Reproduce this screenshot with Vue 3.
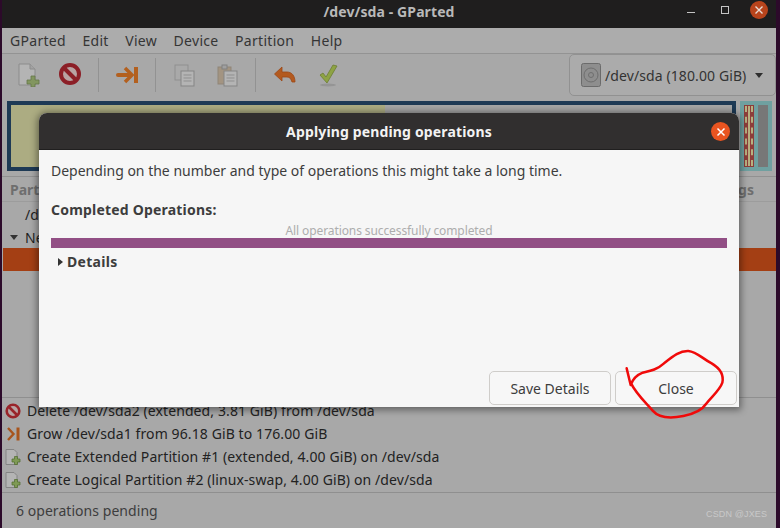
<script setup>
const menus = ['GParted', 'Edit', 'View', 'Device', 'Partition', 'Help']
const ops = [
  { icon: 'del', text: 'Delete /dev/sda2 (extended, 3.81 GiB) from /dev/sda' },
  { icon: 'grow', text: 'Grow /dev/sda1 from 96.18 GiB to 176.00 GiB' },
  { icon: 'new', text: 'Create Extended Partition #1 (extended, 4.00 GiB) on /dev/sda' },
  { icon: 'new', text: 'Create Logical Partition #2 (linux-swap, 4.00 GiB) on /dev/sda' }
]
</script>

<template>
  <div class="screen">
    <div class="window">
      <header class="titlebar">
        <span class="title">/dev/sda - GParted</span>
        <span class="win-min"></span>
        <span class="win-max"></span>
        <span class="win-close">
          <svg width="10" height="10" viewBox="0 0 10 10"><path d="M1.5 1.5l7 7M8.5 1.5l-7 7" stroke="#e8dcd6" stroke-width="1.4" /></svg>
        </span>
      </header>

      <nav class="menubar">
        <span v-for="m in menus" :key="m" class="menu">{{ m }}</span>
      </nav>

      <div class="toolbar">
        <div class="tools">
          <svg class="t t-new" width="22" height="24" viewBox="0 0 22 24">
            <path d="M1 1h11l5 5v16H1z" fill="#b4b4b4" stroke="#8c8c8c" />
            <path d="M12 1v5h5" fill="#a2a2a2" stroke="#8c8c8c" />
            <path d="M13 13h4v4h4v4h-4v3h-4v-3H9v-4h4z" fill="#82965f" stroke="#64774a" stroke-width=".8" />
          </svg>
          <svg class="t t-del" width="22" height="24" viewBox="0 0 22 24">
            <circle cx="11" cy="12" r="9" fill="#b9a3a3" stroke="#8c1f27" stroke-width="4" />
            <path d="M4.500 5.500l13 13" stroke="#8c1f27" stroke-width="4" />
          </svg>
          <i class="sep s1"></i>
          <svg class="t t-grow" width="23" height="20" viewBox="0 0 23 20">
            <path d="M2 10h10" stroke="#b3601f" stroke-width="4" stroke-linecap="round" />
            <path d="M9 3l7 7-7 7" fill="none" stroke="#b3601f" stroke-width="3.500" />
            <path d="M20 2v16" stroke="#b3601f" stroke-width="4" />
          </svg>
          <i class="sep s2"></i>
          <svg class="t t-copy" width="21" height="23" viewBox="0 0 21 23">
            <rect x="1" y="1" width="13" height="15" fill="#a9a9a9" stroke="#8f8f8f" />
            <rect x="7" y="7" width="13" height="15" fill="#b4b4b4" stroke="#858585" />
            <path d="M9.500 11h8M9.500 14h8M9.500 17h8" stroke="#8f8f8f" />
          </svg>
          <svg class="t t-paste" width="21" height="23" viewBox="0 0 21 23">
            <rect x="1" y="3" width="13" height="17" fill="#a39481" stroke="#8f8578" />
            <rect x="5" y="1" width="5" height="4" fill="#a0a0a0" stroke="#808080" />
            <rect x="7" y="7" width="13" height="15" fill="#b4b4b4" stroke="#858585" />
            <path d="M9.500 11h8M9.500 14h8M9.500 17h8" stroke="#8f8f8f" />
          </svg>
          <i class="sep s3"></i>
          <svg class="t t-undo" width="23" height="20" viewBox="0 0 23 20">
            <path d="M9 2L1.500 9 9 16v-4h5c3 0 4 2 5 5h3c0-6-3-10-8-10H9z" fill="#b35a1f" stroke="#9c4615" stroke-width=".8" />
          </svg>
          <svg class="t t-apply" width="20" height="24" viewBox="0 0 20 24">
            <path d="M2 12l3-2 3 4 7-12 4 1-10 17z" fill="#8ea344" stroke="#6c7e33" stroke-width=".8" />
            <ellipse cx="10" cy="22" rx="8" ry="1.500" fill="#959595" />
          </svg>
        </div>
        <div class="device">
          <span class="disk">
            <svg width="20" height="24" viewBox="0 0 20 24"><rect x=".5" y=".5" width="19" height="23" rx="2" fill="#8e8e8e" stroke="#6b6b6b" /><circle cx="10" cy="12" r="7" fill="none" stroke="#6e6e6e" /><circle cx="10" cy="12" r="2.500" fill="none" stroke="#6e6e6e" /></svg>
          </span>
          <span class="device-name">/dev/sda (180.00 GiB)</span>
          <i class="caret"></i>
        </div>
      </div>

      <div class="graph">
        <div class="graph-main"><div class="graph-used"></div></div>
        <div class="graph-side">
          <div class="side-red"><div class="side-dash"></div></div>
          <div class="side-gray"></div>
        </div>
      </div>

      <div class="tree">
        <div class="tree-head"><span>Partition</span><span>Flags</span></div>
        <div class="tree-row root"><span>/dev/sda</span></div>
        <div class="tree-row group"><i class="down"></i><span>New Partition</span></div>
        <div class="tree-row selected"></div>
      </div>

      <div class="ops">
        <div v-for="op in ops" :key="op.text" class="op">
          <svg v-if="op.icon === 'del'" width="16" height="16" viewBox="0 0 16 16"><circle cx="8" cy="8" r="6.300" fill="#b8a4a4" stroke="#99242a" stroke-width="2.600" /><path d="M3.500 3.500l9 9" stroke="#99242a" stroke-width="2.600" /></svg>
          <svg v-else-if="op.icon === 'grow'" width="16" height="16" viewBox="0 0 16 16"><path d="M3 2l5.500 6L3 14" fill="none" stroke="#a8541c" stroke-width="2.400" /><path d="M13 1.500v13" stroke="#a8541c" stroke-width="3" /></svg>
          <svg v-else width="16" height="16" viewBox="0 0 16 16"><path d="M1 .5h8l3 3v12H1z" fill="#b4b4b4" stroke="#848484" /><path d="M9.500 7.500h3v2.500H15v3h-2.500v2.500h-3V13H7v-3h2.500z" fill="#7f9a55" stroke="#4f6a2c" stroke-width=".7" /></svg>
          <span>{{ op.text }}</span>
        </div>
      </div>

      <footer class="status">6 operations pending</footer>
    </div>

    <section class="dialog">
      <div class="dlg-head">
        <span class="dlg-title">Applying pending operations</span>
        <span class="dlg-close">
          <svg width="10" height="10" viewBox="0 0 10 10"><path d="M1.500 1.500l7 7M8.500 1.500l-7 7" stroke="#fff" stroke-width="1.500" /></svg>
        </span>
      </div>
      <div class="dlg-body">
        <p class="lead">Depending on the number and type of operations this might take a long time.</p>
        <p class="done">Completed Operations:</p>
        <p class="bar-label">All operations successfully completed</p>
        <div class="bar"></div>
        <div class="details"><i class="right"></i>Details</div>
        <div class="actions">
          <button class="btn">Save Details</button>
          <button class="btn">Close</button>
        </div>
      </div>
    </section>

    <svg class="scribble" width="320" height="90" viewBox="0 0 960 270">
      <path d="M500 85L512 135C518 118 530 105 548 98C570 93 590 90 612 70C640 48 660 32 685 33C712 36 725 55 755 70C780 85 792 105 787 128C780 150 755 170 738 192C725 212 700 222 670 228C640 234 600 238 578 212C560 190 530 165 512 128" fill="none" stroke="#f00a0a" stroke-width="7.500" stroke-linecap="round" stroke-linejoin="round" />
    </svg>

    <span class="mark">CSDN @JXES</span>
  </div>
</template>

<style>
html, body { margin: 0; background: #2c0f2b; }
</style>

<style scoped>
.screen {
  position: relative;
  width: 780px;
  height: 528px;
  overflow: hidden;
  background: #2c0a2a;
  font-family: "Noto Sans", "DejaVu Sans", sans-serif;
  font-size: 14px;
  color: #3a3a3a;
}
.window {
  width: 774px;
  height: 528px;
  margin-left: 2px;
  background: #a8a8a8;
  display: flex;
  flex-direction: column;
}
.titlebar {
  height: 28px;
  flex: none;
  background: #1f1e1e;
  position: relative;
  display: flex;
  align-items: center;
  justify-content: center;
}
.title {
  font-weight: 700;
  color: #b9b9b9;
  font-size: 14px;
  letter-spacing: .1px;
  margin-top: -6px;
}
.win-min { position: absolute; left: 685px; top: 12px; width: 8px; height: 1px; background: #c4c4c4; }
.win-max { position: absolute; left: 719px; top: 6px; width: 6px; height: 6px; border: 1px solid #c4c4c4; }
.win-close {
  position: absolute; left: 748px; top: 1px; width: 18px; height: 18px; border-radius: 50%;
  background: #b8441c; display: flex; align-items: center; justify-content: center;
}
.menubar {
  height: 25px;
  flex: none;
  background: #acacac;
  border-bottom: 1px solid #939393;
  display: flex;
  align-items: center;
  padding-left: 8px;
  gap: 16.5px;
  color: #353535;
  letter-spacing: .3px;
}
.toolbar {
  height: 46px;
  flex: none;
  display: flex;
  justify-content: space-between;
}
.tools { position: relative; flex: 1; }
.t { position: absolute; }
.t-new { left: 16px; top: 9px; }
.t-del { left: 57px; top: 8px; }
.t-grow { left: 114px; top: 11px; }
.t-copy { left: 172px; top: 10px; }
.t-paste { left: 215px; top: 10px; }
.t-undo { left: 271px; top: 11px; }
.t-apply { left: 316px; top: 9px; }
.sep { position: absolute; top: 4px; width: 1px; height: 34px; background: #929292; }
.s1 { left: 96px; }
.s2 { left: 153px; }
.s3 { left: 253px; }
.device {
  width: 207px;
  height: 42px;
  box-sizing: border-box;
  border: 1px solid #919191;
  border-radius: 5px;
  background: #ababab;
  display: flex;
  align-items: center;
  padding-left: 11px;
  color: #333;
  white-space: nowrap;
}
.disk { width: 20px; height: 24px; display: block; margin-right: 4px; }
.device-name { flex: 1; letter-spacing: .1px; }
.caret { width: 0; height: 0; border: 4.500px solid transparent; border-top: 5px solid #2e2e2e; border-bottom: 0; margin-right: 12px; }
.graph {
  height: 70px;
  flex: none;
  margin-top: 1px;
  display: flex;
  padding-left: 5px;
}
.graph-main {
  width: 729px;
  box-sizing: border-box;
  border: 4px solid #1e3a55;
  background: #a6a6a6;
}
.graph-used { width: 374px; height: 100%; background: #acac82; }
.graph-side {
  margin-left: 4px;
  width: 32px;
  box-sizing: border-box;
  background: #6fa0a0;
  padding: 4px;
  display: flex;
  gap: 4px;
}
.side-red { width: 10px; background: #8c3d3a; position: relative; }
.side-dash {
  position: absolute; left: 1px; right: 1px; top: 1px; bottom: 1px;
  border-left: 2px dashed #b8b080; border-right: 2px dashed #b8b080;
  background: linear-gradient(#b8b080, #b8b080) center / 2px 100% no-repeat;
}
.side-gray { width: 10px; background: #777; }
.tree {
  flex: 1;
  min-height: 0;
  margin-top: 5px;
  border-top: 1px solid #919191;
  border-bottom: 1px solid #8f8f8f;
}
.tree-head {
  height: 24px;
  border-bottom: 1px solid #9c9c9c;
  padding: 0 22px 0 8px;
  display: flex;
  justify-content: space-between;
  align-items: center;
  font-weight: 700;
  color: #6e6e6e;
}
.tree-row { height: 22px; display: flex; align-items: center; color: #1f1f1f; white-space: nowrap; }
.root { padding-left: 23px; height: 24px; }
.group { padding-left: 8px; }
.down { width: 0; height: 0; border: 4.500px solid transparent; border-top: 5px solid #333; border-bottom: 0; margin-right: 7px; }
.selected { background: #a43f14; margin-left: 1px; height: 23px; }
.ops {
  flex: none;
  height: 94px;
  padding-left: 3px;
  margin-top: 1px;
  border-bottom: 1px solid #8f8f8f;
  box-sizing: border-box;
}
.op { height: 23px; display: flex; align-items: center; gap: 6px; color: #222; white-space: nowrap; letter-spacing: .1px; }
.op svg { flex: none; }
.status { height: 35px; flex: none; display: flex; align-items: center; padding-left: 14px; color: #3d3d3d; letter-spacing: .05px; }
.dialog {
  position: absolute;
  left: 39px;
  top: 113px;
  width: 700px;
  height: 294px;
  display: flex;
  flex-direction: column;
  border-radius: 8px 8px 0 0;
  box-shadow: 0 1px 7px 2px rgba(0, 0, 0, .42);
  background: #f6f6f6;
}
.dlg-head {
  height: 37px;
  flex: none;
  background: #312f2f;
  border-radius: 8px 8px 0 0;
  position: relative;
  display: flex;
  align-items: center;
  justify-content: center;
  border-bottom: 1px solid #201f1f;
  box-sizing: border-box;
}
.dlg-title { color: #f3f3f3; font-weight: 700; margin-top: 1px; letter-spacing: .15px; }
.dlg-close {
  position: absolute; left: 672px; top: 9px; width: 19px; height: 19px; border-radius: 50%;
  background: #e95420; display: flex; align-items: center; justify-content: center;
}
.dlg-body { flex: 1; position: relative; padding: 0 12px; }
.dlg-body p { margin: 0; }
.lead { padding-top: 11px; line-height: 19px; color: #3d3d3d; }
.done { margin-top: 20px !important; font-weight: 700; line-height: 19px; color: #3d3d3d; letter-spacing: .2px; }
.bar-label { text-align: center; font-size: 12px; letter-spacing: -.1px; color: #adadad; line-height: 16px; margin-top: 4px !important; }
.bar { height: 10px; background: #924f85; margin-top: -1px; }
.details { display: flex; align-items: center; font-weight: 700; padding-left: 7px; line-height: 19px; margin-top: 4px; color: #3d3d3d; letter-spacing: .3px; }
.right { width: 0; height: 0; border: 4.500px solid transparent; border-left: 5px solid #333; border-right: 0; margin-right: 4px; }
.actions { position: absolute; right: 2px; bottom: 2px; display: flex; gap: 4px; }
.btn {
  width: 122px;
  height: 34px;
  box-sizing: border-box;
  border: 1px solid #cfcdca;
  border-radius: 5px;
  background: #f7f7f7;
  font: inherit;
  color: #3d3d3d;
  padding: 0;
}
.scribble { position: absolute; left: 460px; top: 340px; }
.mark {
  position: absolute; left: 706px; top: 507px;
  font-size: 9px; line-height: 14px; letter-spacing: .15px; white-space: nowrap;
  color: #c9c9c9; font-family: "Liberation Sans", sans-serif;
}
</style>
